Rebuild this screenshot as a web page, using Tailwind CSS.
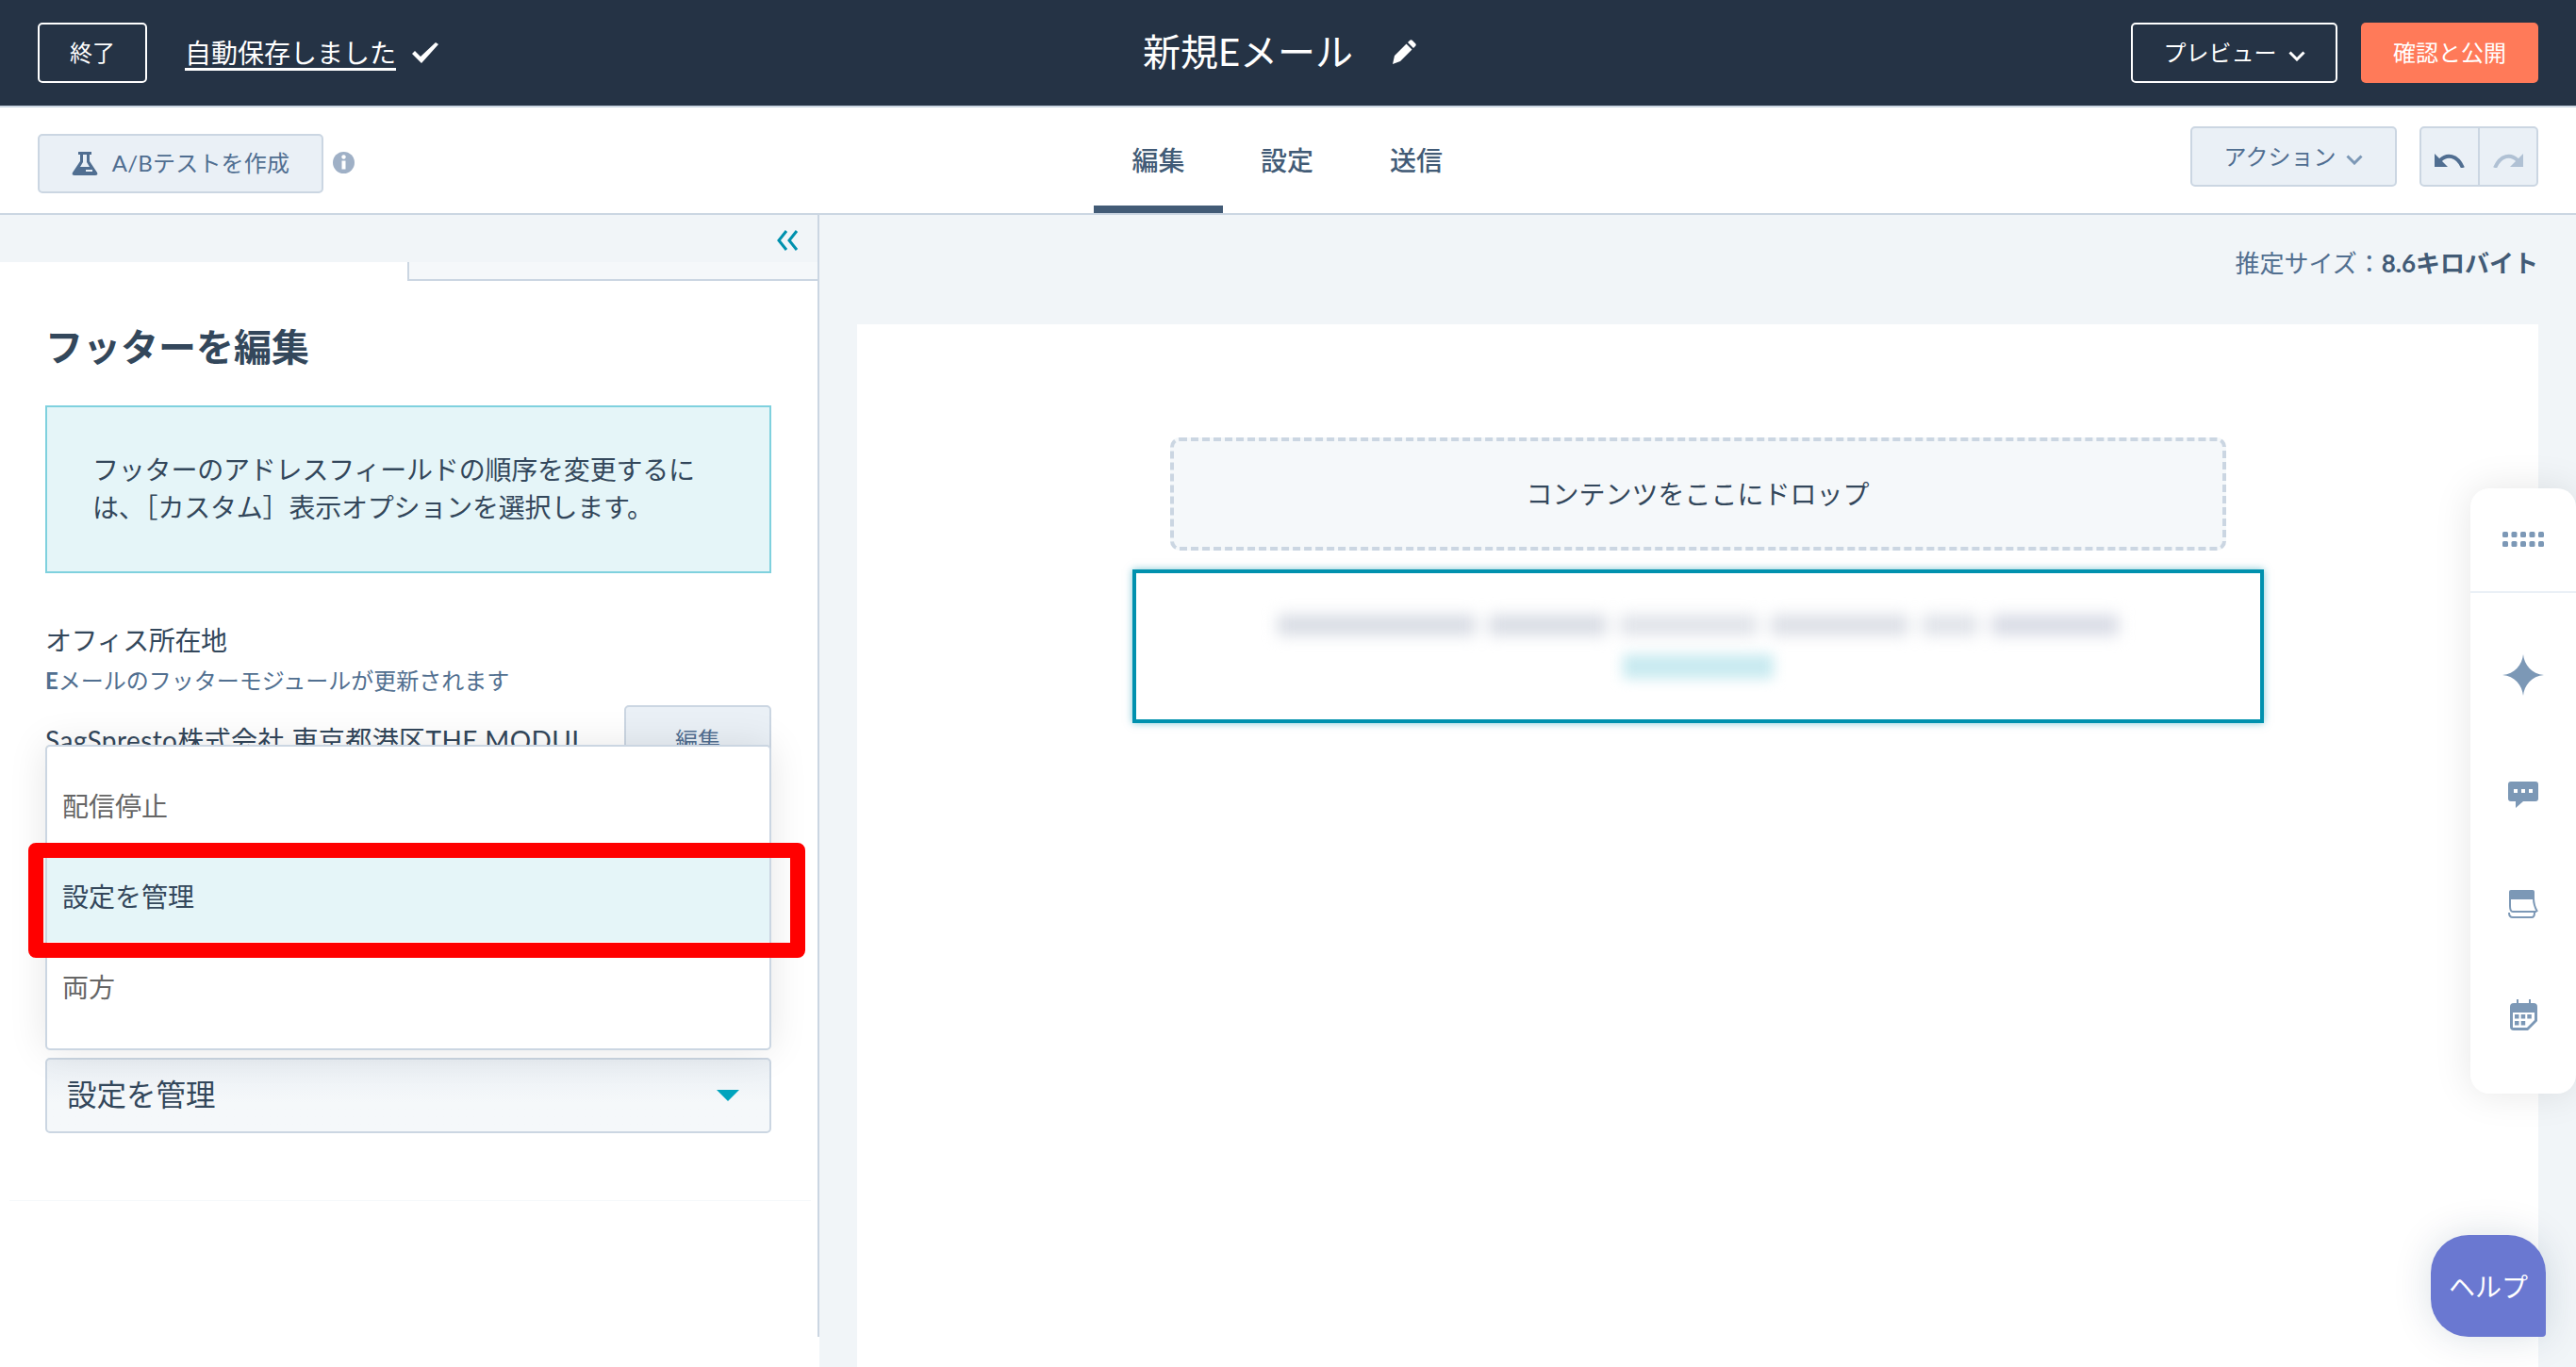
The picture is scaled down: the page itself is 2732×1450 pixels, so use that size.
<!DOCTYPE html>
<html lang="ja">
<head>
  <meta charset="UTF-8" />
  <title>新規Eメール</title>
  <script src="https://cdn.jsdelivr.net/npm/@tailwindcss/browser@4"></script>
</head>
<body class="relative w-[2732px] h-[1450px] overflow-hidden bg-[#f1f5f8] text-[#33475b] font-['Lato','Noto_Sans_CJK_JP',sans-serif]">

  <!-- top bar -->
  <header class="h-[114px] bg-[#253345] border-b-2 border-[#cbd6e2] px-[40px] flex items-center relative">
    <button class="w-[116px] h-[64px] border-2 border-white rounded-[5px] text-white text-[24px]">終了</button>
    <span class="ml-[40px] text-white text-[28px] underline decoration-[3px] underline-offset-[5px]">自動保存しました</span>
    <svg class="ml-[17px]" width="28" height="22" viewBox="0 0 28 22" fill="#fff"><path d="M0 12l3-3 6 6L25 0l3 2L10 22z"/></svg>
    <div class="absolute left-[1212px] top-[21px] flex items-center text-white">
      <span class="text-[40px] leading-[68px]">新規Eメール</span>
      <svg class="ml-[41px]" width="26" height="26" viewBox="0 0 26 26" fill="#fff"><path d="M19 1c1-1 2-1 3 0l3 3c1 1 1 2 0 3l-2 2-6-6zM15.500 4.500l6 6L9 23l-8 3 2-9z"/></svg>
    </div>
    <div class="ml-auto flex items-center gap-[25px]">
      <button class="w-[219px] h-[64px] border-2 border-white rounded-[5px] text-white text-[24px] flex items-center justify-center gap-[12px]">プレビュー
        <svg class="mt-[6px]" width="18" height="11" viewBox="0 0 18 11" fill="none"><path d="M1.500 1.500L9 9l7.500-7.500" stroke="#fff" stroke-width="3"/></svg>
      </button>
      <button class="w-[188px] h-[64px] rounded-[5px] bg-[#ff7a59] text-white text-[24px]">確認と公開</button>
    </div>
  </header>

  <!-- toolbar -->
  <div class="h-[114px] bg-white border-b-2 border-[#cbd6e2] px-[40px] flex items-center relative">
    <button class="w-[303px] h-[63px] mt-[6px] bg-[#eaf0f6] border-2 border-[#cbd6e2] rounded-[5px] text-[#506e91] text-[24px] tracking-[0.2px] flex items-center justify-center gap-[15px]">
      <svg width="28" height="25" viewBox="0 0 28 25"><path d="M7 0h14v3h-2v7l8 12c1 2 0 3-2 3H3c-2 0-3-1-2-3l8-12V3H7z" fill="#506e91"/><path d="M12 3h4v8l3 5H9l3-5z" fill="#eaf0f6"/><rect x="15" y="19" width="7" height="2" fill="#eaf0f6"/></svg>
      A/Bテストを作成
    </button>
    <svg class="ml-[10px] mt-[4px]" width="23" height="23" viewBox="0 0 23 23"><circle cx="11.500" cy="11.500" r="11.500" fill="#9fb0c6"/><rect x="9.500" y="9.500" width="4" height="9" fill="#fff"/><circle cx="11.500" cy="5.500" r="2.200" fill="#fff"/></svg>

    <nav class="absolute left-[1160px] top-0 h-[112px] flex text-[28px] font-medium text-[#425b76]">
      <a class="w-[137px] flex items-center justify-center border-b-[8px] border-[#425b76] pt-[8px]">編集</a>
      <a class="w-[136px] flex items-center justify-center">設定</a>
      <a class="w-[138px] flex items-center justify-center">送信</a>
    </nav>

    <div class="ml-auto flex items-center gap-[24px] -mt-[8px]">
      <button class="w-[219px] h-[64px] bg-[#eaf0f6] border-2 border-[#cbd6e2] rounded-[5px] text-[#506e91] text-[24px] flex items-center justify-center gap-[11px]">アクション
        <svg class="mt-[6px]" width="18" height="11" viewBox="0 0 18 11" fill="none"><path d="M1.500 1.500L9 9l7.500-7.500" stroke="#7c98b6" stroke-width="3"/></svg>
      </button>
      <div class="w-[126px] h-[64px] bg-[#eaf0f6] border-2 border-[#cbd6e2] rounded-[5px] flex">
        <div class="w-[62px] border-r-2 border-[#cbd6e2] flex items-center justify-center">
          <svg class="mt-[8px]" width="32" height="16" viewBox="0 0 32 16" fill="none"><path d="M6 8c7-7 18-6 24 8" stroke="#506e91" stroke-width="4"/><path d="M0 1v14h14z" fill="#506e91"/></svg>
        </div>
        <div class="flex-1 flex items-center justify-center">
          <svg class="mt-[8px]" width="32" height="16" viewBox="0 0 32 16" fill="none"><path d="M26 8C19 1 8 2 2 16" stroke="#b0c1d4" stroke-width="4"/><path d="M32 1v14H18z" fill="#b0c1d4"/></svg>
        </div>
      </div>
    </div>
  </div>

  <div class="flex h-[1222px]">
    <!-- left panel -->
    <aside class="w-[869px] h-full bg-white border-r-2 border-[#cbd6e2] relative">
      <div class="h-[50px] bg-[#f1f5f8] flex items-center justify-end pr-[20px] pt-[4px]">
        <svg width="24" height="22" viewBox="0 0 24 22" fill="none"><path d="M11 1L3 11l8 10M22 1l-8 10 8 10" stroke="#0091ae" stroke-width="3"/></svg>
      </div>
      <div class="ml-[432px] h-[20px] bg-[#f5f8fa] border-l-2 border-b-2 border-[#cbd6e2]"></div>

      <div class="pl-[48px] pr-[49px]">
        <h2 class="mt-[42px] text-[40px] leading-[56px] font-bold text-[#33475b]">フッターを編集</h2>
        <div class="mt-[34px] h-[178px] bg-[#e5f5f8] border-2 border-[#7fd1de] pl-[48px] pr-[40px] pt-[46px] text-[28px] leading-[40px] tracking-[-0.2px] text-[#33475b]">
          フッターのアドレスフィールドの順序を変更するには、［カスタム］表示オプションを選択します。
        </div>
        <p class="mt-[51px] text-[28px] leading-[40px] tracking-[-0.4px]">オフィス所在地</p>
        <p class="mt-[5px] text-[24px] leading-[36px] text-[#516f90]"><b>E</b>メールのフッターモジュールが更新されます</p>
        <div class="mt-[8px] flex justify-between items-start">
          <span class="mt-[17px] text-[28px] leading-[40px] tracking-[0.4px] whitespace-nowrap">SagSpresto株式会社 東京都港区THE MODUL</span>
          <button class="w-[156px] h-[80px] bg-[#eaf0f6] border-2 border-[#cbd6e2] rounded-[5px] text-[24px] text-[#506e91] pb-[6px]">編集</button>
        </div>
      </div>

      <!-- select -->
      <div class="absolute left-[48px] top-[894px] w-[770px] h-[80px] bg-gradient-to-b from-[#eaeff4] to-[#f5f8fa] to-60% border-2 border-[#cbd6e2] rounded-[5px] pl-[21px] pr-[32px] flex items-center justify-between text-[31.5px] text-[#33475b]">
        設定を管理
        <svg width="24" height="12" viewBox="0 0 24 12"><path d="M0 0h24L12 12z" fill="#00a4bd"/></svg>
      </div>

      <div class="absolute left-[10px] top-[1045px] w-[850px] h-[1px] bg-[#f5f8fa]"></div>
      <!-- border stops short of the window bottom -->
      <div class="absolute -right-[2px] bottom-0 w-[2px] h-[32px] bg-white"></div>
    </aside>

    <!-- canvas -->
    <main class="flex-1 px-[40px] relative">
      <p class="h-[116px] pt-[32px] text-right text-[26px] text-[#516f90]">推定サイズ：<b class="font-bold text-[#425b76]">8.6キロバイト</b></p>
      <div class="h-[1106px] bg-white pt-[120px] flex flex-col items-center">
        <div class="w-[1120px] h-[120px] bg-[#f5f8fa] border-4 border-dashed border-[#cbd6e2] rounded-[10px] flex items-center justify-center text-[28px] text-[#33475b]">コンテンツをここにドロップ</div>
        <div class="mt-[20px] w-[1200px] h-[163px] border-4 border-[#0091ae] shadow-[0_0_8px_rgba(0,145,174,0.5)] flex flex-col items-center pt-[44px]">
          <div class="flex gap-[14px] blur-[8px]">
            <div class="w-[210px] h-[22px] bg-[#d8dce4]"></div>
            <div class="w-[125px] h-[22px] bg-[#d8dce4]"></div>
            <div class="w-[146px] h-[22px] bg-[#e0e3e9]"></div>
            <div class="w-[146px] h-[22px] bg-[#dcdfe6]"></div>
            <div class="w-[60px] h-[22px] bg-[#e0e3e9]"></div>
            <div class="w-[135px] h-[22px] bg-[#d8dbe5]"></div>
          </div>
          <div class="mt-[20px] w-[160px] h-[26px] bg-[#c8eaf0] blur-[7px]"></div>
        </div>
      </div>
    </main>
  </div>

  <!-- dropdown -->
  <ul class="absolute left-[48px] top-[790px] w-[770px] h-[324px] bg-white border-2 border-[#cbd6e2] rounded-[5px] shadow-[0_0_40px_rgba(0,0,0,0.1)] pt-[15px] text-[28px] leading-[40px]">
    <li class="h-[96px] pl-[16px] flex items-center text-[#666]">配信停止</li>
    <li class="h-[96px] pl-[16px] flex items-center bg-[#e5f5f8] text-[#33475b]">設定を管理</li>
    <li class="h-[96px] pl-[16px] flex items-center text-[#666]">両方</li>
  </ul>

  <!-- red highlight on top of the option -->
  <div class="absolute left-[30px] top-[894px] w-[824px] h-[122px] border-[16px] border-[#ff0000] rounded-[8px]"></div>

  <!-- right sidebar -->
  <div class="absolute left-[2620px] top-[518px] w-[112px] h-[642px] bg-white rounded-[20px] shadow-[0_0_40px_rgba(0,0,0,0.1)] flex flex-col items-center">
    <div class="w-full h-[111px] border-b-2 border-[#eaf0f6] flex items-center justify-center">
      <svg class="-mt-[2px]" width="44" height="16" viewBox="0 0 44 16" fill="#7c98b6"><rect width="6" height="6" rx="1.500"/><rect x="9.500" width="6" height="6" rx="1.500"/><rect x="19" width="6" height="6" rx="1.500"/><rect x="28.500" width="6" height="6" rx="1.500"/><rect x="38" width="6" height="6" rx="1.500"/><rect y="10" width="6" height="6" rx="1.500"/><rect x="9.500" y="10" width="6" height="6" rx="1.500"/><rect x="19" y="10" width="6" height="6" rx="1.500"/><rect x="28.500" y="10" width="6" height="6" rx="1.500"/><rect x="38" y="10" width="6" height="6" rx="1.500"/></svg>
    </div>
    <svg class="mt-[65px]" width="44" height="44" viewBox="0 0 44 44" fill="#7c98b6"><path d="M22 0c1 11 9 21 22 22-13 1-21 11-22 22-1-11-9-21-22-22 13-1 21-11 22-22z"/></svg>
    <svg class="mt-[91px]" width="32" height="28" viewBox="0 0 32 28" fill="#7c98b6"><path d="M3 0h26a3 3 0 013 3v15a3 3 0 01-3 3H16l-8 7v-7H3a3 3 0 01-3-3V3a3 3 0 013-3z"/><g fill="#fff"><rect x="6" y="8" width="4" height="4"/><rect x="14" y="8" width="4" height="4"/><rect x="22" y="8" width="4" height="4"/></g></svg>
    <svg class="mt-[87px]" width="32" height="30" viewBox="0 0 32 30" fill="none"><path d="M3 0h23a2 2 0 012 2v8H1V2a2 2 0 012-2z" fill="#7c98b6"/><g stroke="#7c98b6" stroke-width="2"><path d="M2 9v8c0 3 1 6 3 6h25M27 9c0 5 1 9 4 14"/><path d="M1 24c0 3 1 5 4 5h20c2 0 3-2 3-5"/></g></svg>
    <svg class="mt-[86px]" width="29" height="33" viewBox="0 0 29 33" fill="#7c98b6"><path d="M7 0h2v4h11V0h2v4h3a4 4 0 014 4v15L19 33H4a4 4 0 01-4-4V8a4 4 0 014-4h3z"/><path d="M3 14h23v8l-8 8H3z" fill="#fff"/><g fill="#7c98b6"><rect x="5" y="16" width="4.500" height="4.500"/><rect x="11.700" y="16" width="4.500" height="4.500"/><rect x="18.300" y="16" width="4.500" height="4.500"/><rect x="5" y="23" width="4.500" height="4.500"/><rect x="11.700" y="23" width="4.500" height="4.500"/></g></svg>
  </div>

  <!-- help -->
  <button class="absolute left-[2578px] top-[1310px] w-[122px] h-[108px] pt-[2px] bg-[#6a78d1] rounded-[40px] rounded-br-[4px] shadow-[0_0_40px_rgba(0,50,80,0.15)] text-white text-[28px]">ヘルプ</button>
</body>
</html>
